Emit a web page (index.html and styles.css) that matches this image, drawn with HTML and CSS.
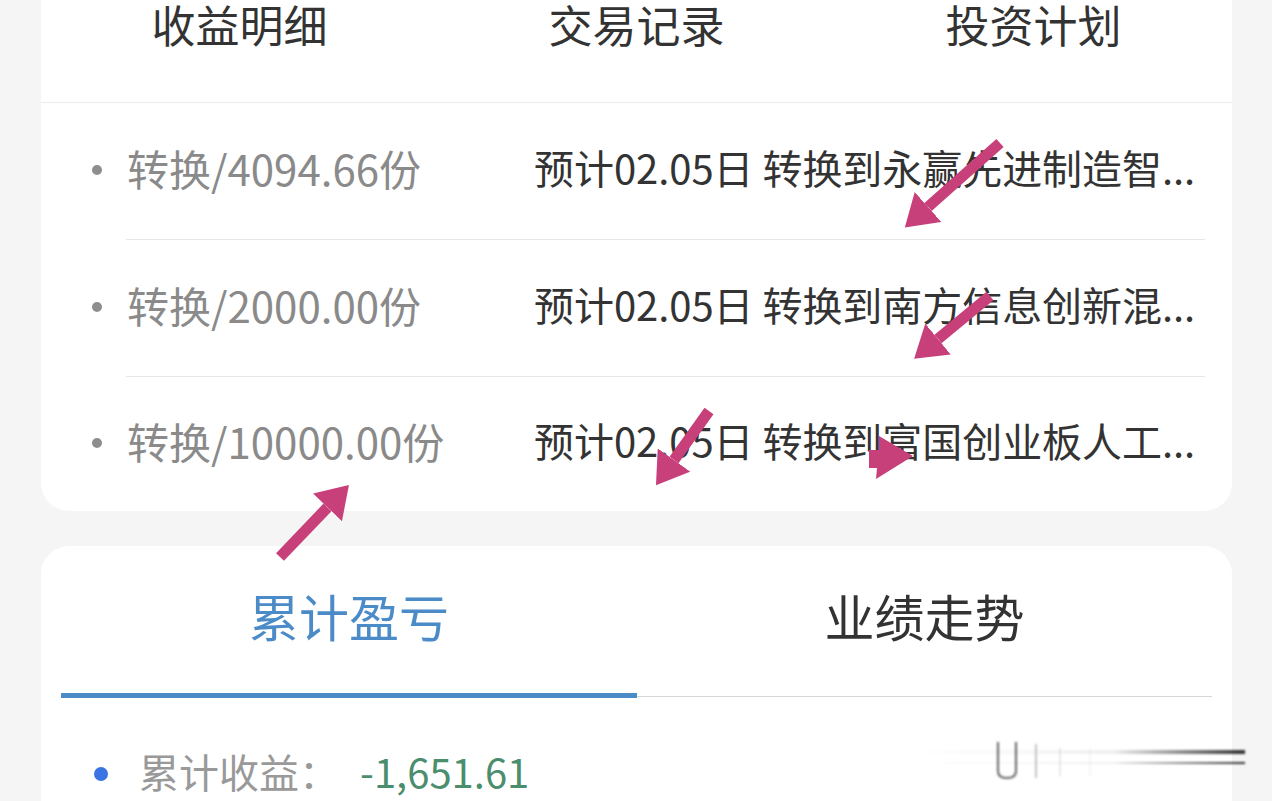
FILE: index.html
```html
<!DOCTYPE html>
<html lang="zh-CN">
<head>
<meta charset="utf-8">
<title>收益明细</title>
<link rel="stylesheet" href="styles.css">
</head>
<body>
<div class="page">
  <section class="card card-top">
    <nav class="tabs3">
      <div class="tab3">收益明细</div>
      <div class="tab3">交易记录</div>
      <div class="tab3">投资计划</div>
    </nav>
    <ul class="rows">
      <li class="row">
        <span class="bullet"><i class="dot"></i></span>
        <div class="row-body">
          <span class="amount">转换/4094.66份</span>
          <span class="desc">预计02.05日 转换到永赢先进制造智...</span>
        </div>
      </li>
      <li class="row">
        <span class="bullet"><i class="dot"></i></span>
        <div class="row-body">
          <span class="amount">转换/2000.00份</span>
          <span class="desc">预计02.05日 转换到南方信息创新混...</span>
        </div>
      </li>
      <li class="row row-last">
        <span class="bullet"><i class="dot"></i></span>
        <div class="row-body">
          <span class="amount">转换/10000.00份</span>
          <span class="desc">预计02.05日 转换到富国创业板人工...</span>
        </div>
      </li>
    </ul>
  </section>

  <section class="card card-bottom">
    <nav class="tabs2">
      <div class="tab2 active">累计盈亏</div>
      <div class="tab2">业绩走势</div>
    </nav>
    <div class="sum">
      <i class="sum-dot"></i>
      <span class="sum-label">累计收益：</span>
      <span class="sum-value">-1,651.61</span>
    </div>
  </section>
</div>

<svg class="overlay" width="1272" height="801" viewBox="0 0 1272 801" aria-hidden="true">
  <defs>
    <marker id="head" markerUnits="userSpaceOnUse" markerWidth="32" markerHeight="40" refX="0" refY="20" orient="auto">
      <path d="M0,0 L31,20 L0,40 z" fill="#c8407a"/>
    </marker>
    <linearGradient id="wm" x1="0" x2="1" y1="0" y2="0">
      <stop offset="0" stop-color="#000" stop-opacity="0"/>
      <stop offset="0.6" stop-color="#000" stop-opacity="0.06"/>
      <stop offset="1" stop-color="#000" stop-opacity="0.8"/>
    </linearGradient>
    <filter id="soft"><feGaussianBlur stdDeviation="1"/></filter>
  </defs>
  <g stroke="#c8407a" stroke-width="11" fill="none">
    <line x1="1000" y1="143" x2="928" y2="207" marker-end="url(#head)"/>
    <line x1="990" y1="296" x2="938" y2="339" marker-end="url(#head)"/>
    <line x1="709" y1="411" x2="674" y2="460" marker-end="url(#head)"/>
    <line x1="280" y1="557" x2="327.5" y2="507.4" marker-end="url(#head)"/>
  </g>
  <g fill="#c8407a">
    <polygon points="879,436 913,456 876,479 877,468 869,468 869,450 879,450"/>
  </g>
  <g filter="url(#soft)" fill="none">
    <rect x="915" y="750" width="330" height="4" fill="url(#wm)"/>
    <rect x="915" y="762" width="330" height="2" fill="url(#wm)"/>
    <path d="M998,742 V771 Q998,778 1007,778 Q1016,778 1016,771 V742" stroke="#222" stroke-width="2" stroke-opacity="0.7"/>
    <line x1="1036" y1="744" x2="1036" y2="778" stroke="#666" stroke-width="1.5" stroke-opacity="0.5"/>
    <line x1="1060" y1="748" x2="1060" y2="776" stroke="#888" stroke-width="1.2" stroke-opacity="0.3"/>
    <line x1="1090" y1="748" x2="1090" y2="776" stroke="#999" stroke-width="1.2" stroke-opacity="0.2"/>
  </g>
</svg>
</body>
</html>
```

FILE: styles.css
```css
* {
  box-sizing: border-box;
}

html, body {
  margin: 0;
  padding: 0;
}

body {
  width: 1272px;
  height: 801px;
  overflow: hidden;
  background: #f5f5f5;
  font-family: "Noto Sans CJK SC", "Noto Sans", sans-serif;
  position: relative;
}

.page {
  padding: 0 40px 0 41px;
  display: flex;
  flex-direction: column;
  gap: 35px;
}

.card {
  background: #ffffff;
  border-radius: 28px;
}

.card-top {
  border-top-left-radius: 0;
  border-top-right-radius: 0;
}

/* top tabs */
.tabs3 {
  display: grid;
  grid-template-columns: 1fr 1fr 1fr;
  height: 103px;
  border-bottom: 1px solid #ececec;
}

.tab3 {
  text-align: center;
  font-size: 44px;
  line-height: 44px;
  padding-top: 2px;
  color: #333333;
}

/* list rows */
.rows {
  list-style: none;
  margin: 0;
  padding: 0;
}

.row {
  display: flex;
  height: 137px;
}

.row-last {
  height: 134px;
}

.bullet {
  width: 85px;
  flex: none;
  display: flex;
  align-items: center;
  padding-left: 51px;
}

.dot {
  width: 10px;
  height: 10px;
  border-radius: 50%;
  background: #8e8e8e;
  margin-top: -3px;
}

.row-body {
  flex: 1;
  margin-right: 27px;
  padding-bottom: 8px;
  display: flex;
  align-items: center;
  border-bottom: 1px solid #e6e6e6;
  white-space: nowrap;
  overflow: hidden;
}

.row-last .row-body {
  border-bottom: none;
}

.amount {
  width: 408px;
  flex: none;
  padding-left: 1px;
  font-size: 42px;
  color: #8a8a8a;
}

.desc {
  font-size: 40px;
  color: #333333;
  letter-spacing: -0.05px;
}

/* bottom tabs */
.card-bottom {
  border-bottom-left-radius: 0;
  border-bottom-right-radius: 0;
  height: 300px;
}

.tabs2 {
  display: grid;
  grid-template-columns: 576px 1fr;
  margin: 0 20px;
  align-items: start;
}

.tab2 {
  text-align: center;
  font-size: 50px;
  line-height: 138px;
  height: 151px;
  color: #333333;
  border-bottom: 1px solid #d6d6d6;
  margin-bottom: 1px;
}

.tab2.active {
  color: #4b8bc8;
  height: 152px;
  margin-bottom: 0;
  border-bottom: 5px solid #4b8bc8;
}

.sum {
  display: flex;
  align-items: center;
  height: 150px;
  padding-left: 53px;
  padding-bottom: 4px;
}

.sum-dot {
  width: 14px;
  height: 14px;
  border-radius: 50%;
  background: #3a74e2;
  flex: none;
  margin-top: 6px;
}

.sum-label {
  margin-left: 31px;
  font-size: 40px;
  color: #999999;
}

.sum-value {
  margin-left: 21px;
  font-size: 40px;
  color: #4b8e6e;
}

.overlay {
  position: absolute;
  left: 0;
  top: 0;
  pointer-events: none;
}
```
